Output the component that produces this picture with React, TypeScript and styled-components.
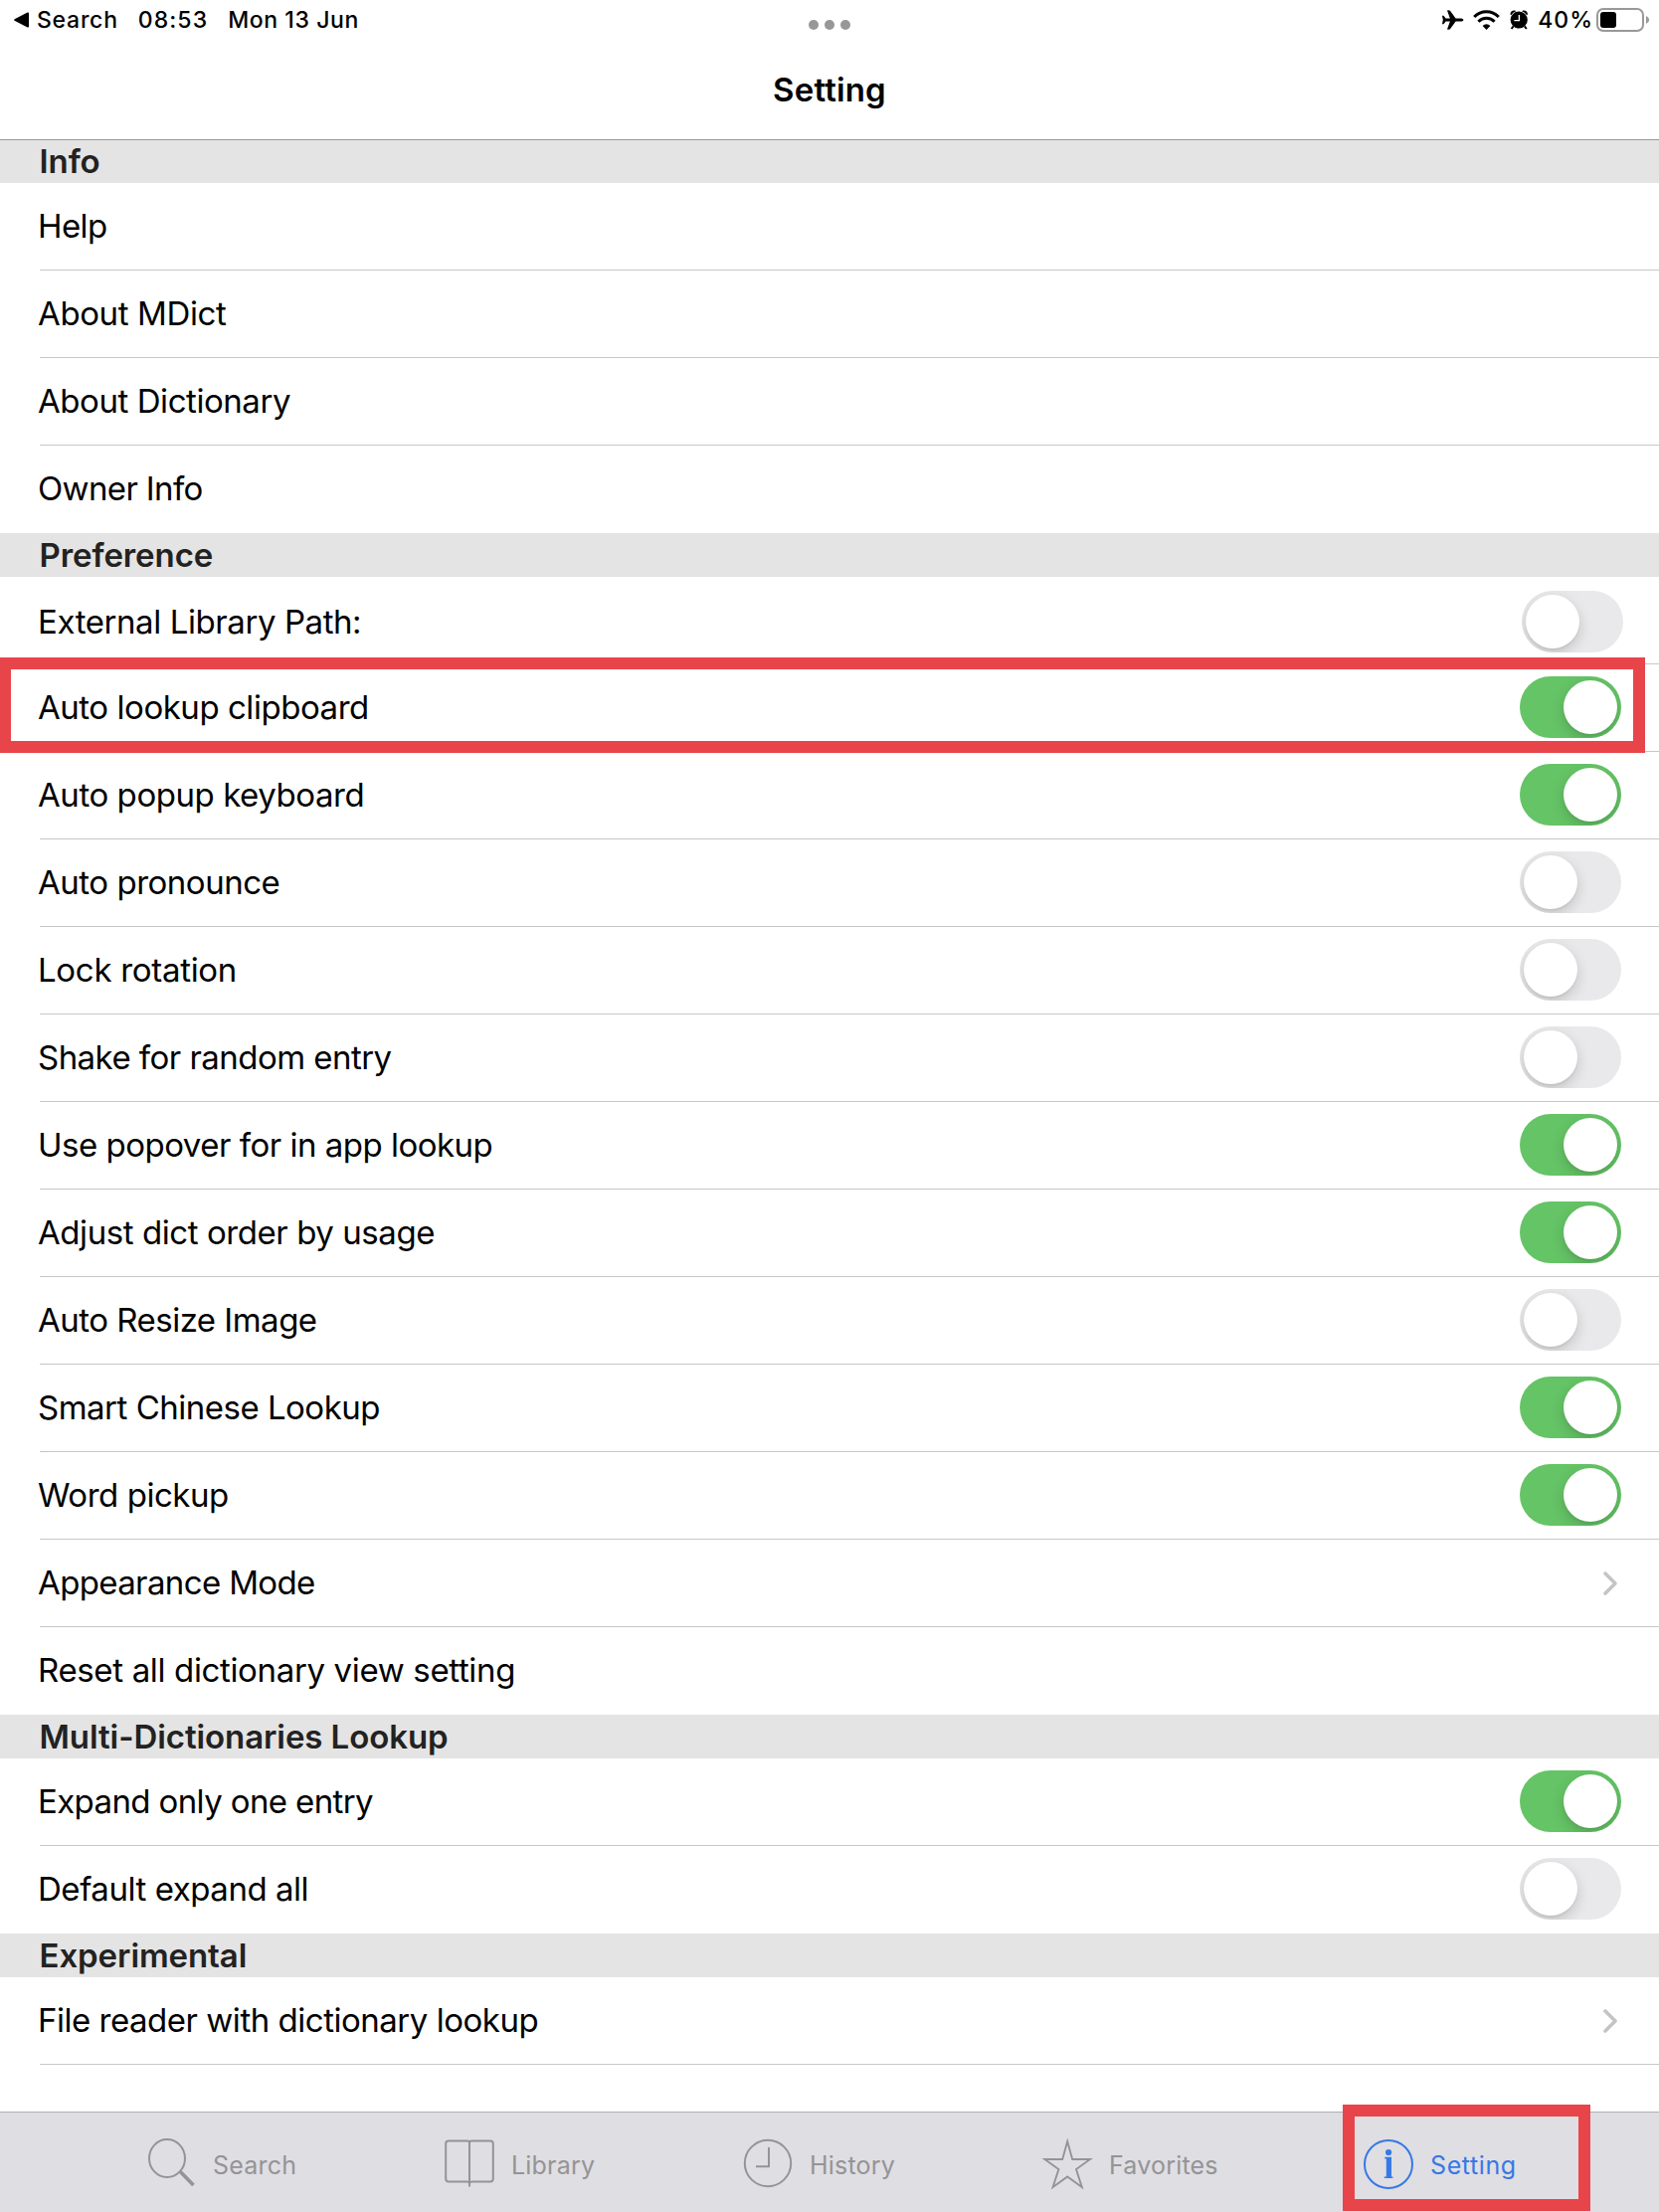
import React from "react";
import styled, { createGlobalStyle, css } from "styled-components";

const RED = "#e8454b";
const LINE = "#c7c7c9";

const GlobalStyle = createGlobalStyle`
  *, *::before, *::after { box-sizing: border-box; }
  body { margin: 0; background: #fff; }
`;

const Page = styled.div`
  width: 1668px;
  height: 2224px;
  display: flex;
  flex-direction: column;
  overflow: hidden;
  background: #fff;
  color: #000;
  font-family: Inter, "Liberation Sans", sans-serif;
  font-kerning: normal;
`;

/* ---------- top area ---------- */

const StatusBar = styled.header`
  flex: none;
  height: 40px;
  display: grid;
  grid-template-columns: 1fr auto 1fr;
  align-items: center;
  padding: 0 9px 0 14px;
  font-size: 23px;
  font-weight: 500;
  line-height: 28px;
`;

const StatusLeft = styled.div`
  display: flex;
  align-items: center;
  gap: 20px;
`;

const BackLink = styled.span`
  display: flex;
  align-items: center;
  gap: 7px;
`;

const StatusText = styled.span<{ $tracking: number }>`
  letter-spacing: ${(p) => p.$tracking}px;
  white-space: nowrap;
`;

const Dots = styled.div`
  display: flex;
  gap: 6px;
  padding: 10px 0 0 0;
  margin-right: 5px;
`;

const Dot = styled.i`
  width: 10px;
  height: 10px;
  border-radius: 50%;
  background: #979797;
`;

const StatusRight = styled.div`
  display: flex;
  align-items: center;
  justify-content: flex-end;
  gap: 9px;

  svg { display: block; }
`;

const BatteryGroup = styled.span`
  display: flex;
  align-items: center;
  gap: 3px;
`;

const TitleBar = styled.div`
  flex: none;
  height: 100px;
  display: flex;
  justify-content: center;
`;

const Title = styled.h1`
  margin: 0;
  font-size: 33px;
  line-height: 100px;
  font-weight: 600;
  letter-spacing: 0.15px;
`;

/* ---------- list ---------- */

const List = styled.main`
  flex: 1;
  min-height: 0;
`;

const SectionHeader = styled.h2<{ $first: boolean }>`
  margin: 0;
  height: 44px;
  padding-left: 39.5px;
  background: #e4e4e4;
  color: #222;
  font-size: 33px;
  line-height: 44px;
  font-weight: 600;
  letter-spacing: -0.08px;
  ${(p) => p.$first && css`box-shadow: inset 0 1px 0 #97979b;`}
`;

const Row = styled.div<{ $separator: boolean; $loose: boolean }>`
  position: relative;
  height: 88px;
  display: flex;
  align-items: center;
  justify-content: space-between;
  padding: ${(p) => (p.$loose ? "2px 36px 0 38px" : "0 38px 2px 38px")};

  ${(p) =>
    p.$separator &&
    css`
      &::after {
        content: "";
        position: absolute;
        left: 40px;
        right: 0;
        bottom: 0;
        height: 1px;
        background: ${LINE};
      }
    `}
`;

const Label = styled.span<{ $tracking: number }>`
  font-size: 33px;
  line-height: 40px;
  letter-spacing: ${(p) => p.$tracking}px;
  white-space: nowrap;
`;

const Track = styled.span<{ $on: boolean }>`
  width: 102px;
  height: 62px;
  display: flex;
  justify-content: ${(p) => (p.$on ? "flex-end" : "flex-start")};
  padding: 4px;
  border-radius: 31px;
  overflow: hidden;
  background: ${(p) => (p.$on ? "#65c466" : "#e9e9eb")};
`;

const Knob = styled.span`
  width: 54px;
  height: 54px;
  border-radius: 50%;
  background: #fff;
  box-shadow: 0 5px 14px rgba(0, 0, 0, 0.17), 0 2px 2px rgba(0, 0, 0, 0.05);
`;

const Chevron = styled.svg`
  display: block;
  margin: 2px 3px 0 0;
`;

const RowFrame = styled.div`
  position: absolute;
  z-index: 2;
  top: -7px;
  left: -1px;
  width: 1655px;
  height: 96px;
  border: 12px solid ${RED};
`;

/* ---------- tab bar ---------- */

const TabBar = styled.nav`
  flex: none;
  height: 101px;
  display: grid;
  grid-template-columns: 300px 300px 301px 323px auto;
  padding-left: 145px;
  border-top: 1px solid #b0b0b3;
  background: #dfdee3;
`;

const Tab = styled.div<{ $active: boolean }>`
  position: relative;
  display: flex;
  align-items: center;
  gap: 15px;
  color: ${(p) => (p.$active ? "#3778e6" : "#949496")};
`;

const TabIcon = styled.svg`
  flex: none;
  display: block;
  margin-top: 2px;
  fill: none;
  stroke: currentColor;
  stroke-width: 2;
`;

const TabLabel = styled.span<{ $tracking: number }>`
  padding-top: 6px;
  font-size: 25px;
  line-height: 30px;
  letter-spacing: ${(p) => p.$tracking}px;
`;

const TabFrame = styled.div`
  position: absolute;
  z-index: 2;
  top: -8px;
  left: -19px;
  width: 249px;
  height: 107px;
  border: 12px solid ${RED};
`;

/* ---------- data ---------- */

type Item = {
  label: string;
  tracking: number;
  on?: boolean;
  more?: boolean;
  loose?: boolean;
  framed?: boolean;
};

const sections: { title: string; items: Item[] }[] = [
  {
    title: "Info",
    items: [
      { label: "Help", tracking: -0.6 },
      { label: "About MDict", tracking: -0.38 },
      { label: "About Dictionary", tracking: -0.44 },
      { label: "Owner Info", tracking: -0.64 },
    ],
  },
  {
    title: "Preference",
    items: [
      { label: "External Library Path:", tracking: -0.42, on: false, loose: true },
      { label: "Auto lookup clipboard", tracking: -0.46, on: true, framed: true },
      { label: "Auto popup keyboard", tracking: -0.44, on: true },
      { label: "Auto pronounce", tracking: -0.48, on: false },
      { label: "Lock rotation", tracking: -0.3, on: false },
      { label: "Shake for random entry", tracking: -0.54, on: false },
      { label: "Use popover for in app lookup", tracking: -0.5, on: true },
      { label: "Adjust dict order by usage", tracking: -0.43, on: true },
      { label: "Auto Resize Image", tracking: -0.51, on: false },
      { label: "Smart Chinese Lookup", tracking: -0.5, on: true },
      { label: "Word pickup", tracking: -0.47, on: true },
      { label: "Appearance Mode", tracking: -0.63, more: true },
      { label: "Reset all dictionary view setting", tracking: -0.35 },
    ],
  },
  {
    title: "Multi-Dictionaries Lookup",
    items: [
      { label: "Expand only one entry", tracking: -0.62, on: true },
      { label: "Default expand all", tracking: -0.46, on: false },
    ],
  },
  {
    title: "Experimental",
    items: [{ label: "File reader with dictionary lookup", tracking: -0.48, more: true }],
  },
];

const tabs: { label: string; tracking: number; active?: boolean; icon: React.ReactNode }[] = [
  {
    label: "Search",
    tracking: 0.2,
    icon: (
      <>
        <ellipse cx="23" cy="22" rx="18" ry="19" />
        <path d="M36.3 35.5 L49.5 49" strokeWidth="3.6" />
      </>
    ),
  },
  {
    label: "Library",
    tracking: 0.2,
    icon: (
      <>
        <path d="M27 5.5 Q26.2 4.5 24.5 4.5 H6 Q3.2 4.5 3.2 7.3 V42.5 Q3.2 45.4 6 45.4 H24.5 Q26.2 45.4 27 47 Q27.8 45.4 29.5 45.4 H48 Q50.8 45.4 50.8 42.5 V7.3 Q50.8 4.5 48 4.5 H29.5 Q27.8 4.5 27 5.5 V50.5" />
      </>
    ),
  },
  {
    label: "History",
    tracking: 0.2,
    icon: (
      <>
        <circle cx="27" cy="27" r="23.2" />
        <path d="M28 11 V30.3 H15" />
      </>
    ),
  },
  {
    label: "Favorites",
    tracking: 0.2,
    icon: (
      <path d="M27.2 5 L32.2 23 H50 L36 33 L41.8 51 L27.2 40.4 L12.6 51 L18.4 33 L4.4 23 H22.2 Z" strokeWidth="1.9" />
    ),
  },
  {
    label: "Setting",
    tracking: 0.6,
    active: true,
    icon: (
      <>
        <circle cx="27" cy="28" r="24" />
        <g fill="currentColor" stroke="none">
          <circle cx="27.1" cy="16" r="3.1" />
          <path d="M23.3 20.8 H30 V40.4 H31.4 V42 H22.8 V40.4 H24.8 V22.4 H23.3 Z" />
        </g>
      </>
    ),
  },
];

/* ---------- status icons ---------- */

const BackTriangle = () => (
  <svg width="16" height="16" viewBox="0 0 16 16">
    <path d="M.6 7.2 L13.6.5 Q15 .1 15 1.6 V14.4 Q15 15.9 13.6 15.4 L.6 8.8 Q-.4 8 .6 7.2Z" />
  </svg>
);

const Plane = () => (
  <svg width="22" height="20" viewBox="0 0 22 20">
    <path d="M21.4 10 C21.4 9 20 8.4 18.3 8.4 H13.6 L8 .7 Q7.4 .2 5 .4 L7.9 8.4 L3.6 8.6 L1.5 5.8 H0 L.8 10 L0 14.2 H1.5 L3.6 11.4 L7.9 11.6 L5 19.6 Q7.4 19.8 8 19.3 L13.6 11.6 H18.3 C20 11.6 21.4 11 21.4 10Z" />
  </svg>
);

const Wifi = () => (
  <svg width="28" height="20" viewBox="0 0 28 20">
    <g fill="none" stroke="#000" strokeWidth="3">
      <path d="M1.2 7 A17 17 0 0 1 25.8 7" />
      <path d="M5.4 11.7 A11.2 11.2 0 0 1 21.6 11.7" />
    </g>
    <path d="M9.6 16 A5.3 5.3 0 0 1 17.4 16 L13.5 20Z" />
  </svg>
);

const Alarm = () => (
  <svg width="19" height="20" viewBox="0 0 19 20">
    <path d="M3.6 16.4 L1.6 19 M14.8 16.4 L16.8 19" stroke="#000" strokeWidth="2" />
    <circle cx="9.2" cy="10" r="8.6" />
    <path d="M.6 4.6 C.2 2 2.6 0 5.6 .7 Q6.6 1 5.8 1.5 Q3.2 2.6 1.8 4.8 Q.9 5.6 .6 4.6Z M17.8 4.6 C18.2 2 15.8 0 12.8 .7 Q11.8 1 12.6 1.5 Q15.2 2.6 16.6 4.8 Q17.5 5.6 17.8 4.6Z" />
    <path d="M9.4 5 V10.6 H4.4" fill="none" stroke="#fff" strokeWidth="1.4" />
  </svg>
);

const Battery = () => (
  <svg width="54" height="24" viewBox="0 0 54 24">
    <rect x="1" y="1" width="46" height="22" rx="6" fill="none" stroke="#999" strokeWidth="2" />
    <rect x="4" y="4" width="16" height="16" rx="3" />
    <path d="M50 8 Q53.2 9.5 53.2 12 Q53.2 14.5 50 16Z" fill="#999" />
  </svg>
);

export default function App() {
  return (
    <Page>
      <GlobalStyle />
      <StatusBar>
        <StatusLeft>
          <BackLink>
            <BackTriangle />
            <StatusText $tracking={0.75}>Search</StatusText>
          </BackLink>
          <StatusText $tracking={1.1}>08:53</StatusText>
          <StatusText $tracking={0.58}>Mon 13 Jun</StatusText>
        </StatusLeft>
        <Dots>
          <Dot />
          <Dot />
          <Dot />
        </Dots>
        <StatusRight>
          <Plane />
          <Wifi />
          <Alarm />
          <BatteryGroup>
            <StatusText $tracking={1}>40%</StatusText>
            <Battery />
          </BatteryGroup>
        </StatusRight>
      </StatusBar>
      <TitleBar>
        <Title>Setting</Title>
      </TitleBar>
      <List>
        {sections.map((section, s) => (
          <section key={section.title}>
            <SectionHeader $first={s === 0}>{section.title}</SectionHeader>
            {section.items.map((item, i) => (
              <Row
                key={item.label}
                $loose={!!item.loose}
                $separator={i < section.items.length - 1 || s === sections.length - 1}
              >
                <Label $tracking={item.tracking}>{item.label}</Label>
                {item.on !== undefined && (
                  <Track $on={item.on}>
                    <Knob />
                  </Track>
                )}
                {item.more && (
                  <Chevron width="16" height="26" viewBox="0 0 16 26">
                    <path
                      d="M3 3 L13 13 L3 23"
                      fill="none"
                      stroke="#c4c4c7"
                      strokeWidth="3.6"
                      strokeLinecap="round"
                      strokeLinejoin="round"
                    />
                  </Chevron>
                )}
                {item.framed && <RowFrame />}
              </Row>
            ))}
          </section>
        ))}
      </List>
      <TabBar>
        {tabs.map((tab) => (
          <Tab key={tab.label} $active={!!tab.active}>
            <TabIcon width="54" height="54" viewBox="0 0 54 54">
              {tab.icon}
            </TabIcon>
            <TabLabel $tracking={tab.tracking}>{tab.label}</TabLabel>
            {tab.active && <TabFrame />}
          </Tab>
        ))}
      </TabBar>
    </Page>
  );
}
